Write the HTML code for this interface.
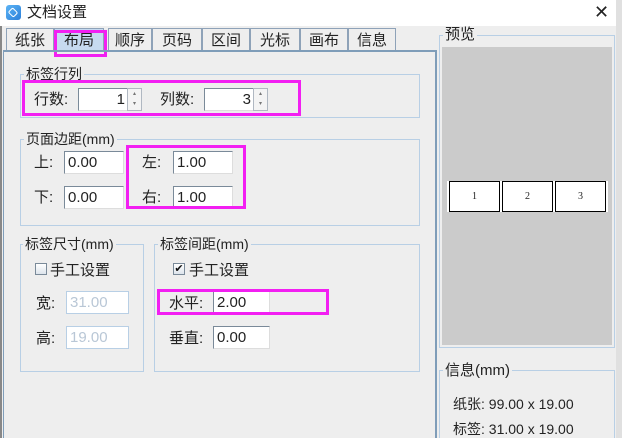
<!DOCTYPE html>
<html style="overflow:hidden;width:622px;height:438px"><head><meta charset="utf-8"><style>
*{margin:0;padding:0;box-sizing:border-box}
body{width:622px;height:438px;overflow:hidden;background:#eeeeee;font-family:"Liberation Sans","Noto Sans CJK SC",sans-serif;font-size:14px;color:#222;position:relative}
.a{position:absolute}
.t{position:absolute;line-height:16px;white-space:nowrap}
.tab{position:absolute;top:28px;height:23px;border:1px solid #8ea2b8;border-bottom:none;background:#eeeeee;font-size:15px;text-align:center;line-height:24px}
.grp{position:absolute;border:1px solid #b8cfe5}
.lg{position:absolute;background:#eeeeee;padding:0 2px;line-height:16px;font-size:14px;white-space:nowrap}
.in{position:absolute;background:#fff;border:1px solid #7a8a99;border-right-color:#ddd;border-bottom-color:#ddd;height:23px;line-height:21px;font-size:15px;padding-left:3px;color:#222}
.dis{border-color:#b8cfe5;color:#b9c7d6}
.mg{position:absolute;border:3px solid #f21ff2}
.cb{position:absolute;width:12px;height:12px;border:1px solid #7a8a99;background:linear-gradient(#fff,#dde4ec)}
.box{position:absolute;top:181px;height:31px;width:51px;border:1px solid #000;background:#fff;font-family:"Liberation Serif",serif;font-size:10px;text-align:center;line-height:29px}
</style></head><body>
<div class="a" style="left:0;top:0;width:616px;height:26px;background:#fff"></div>
<div class="a" style="left:616px;top:0;width:6px;height:438px;background:#e0e0e0"></div>
<div class="a" style="left:0;top:26px;width:2px;height:412px;background:#888"></div>
<div class="a" style="left:6px;top:5px;width:15px;height:15px;border-radius:3px;background:linear-gradient(135deg,#5cb4f5,#2c7fd9)"><div class="a" style="left:3px;top:4px;width:8px;height:7px;border:1px solid #fff;border-radius:2px;transform:rotate(45deg)"></div></div>
<div class="t" style="left:27px;top:5px;font-size:15px">文档设置</div>
<div class="t" style="left:594px;top:4px;font-size:18px;color:#222">✕</div>

<div class="tab" style="left:6px;width:48px">纸张</div>
<div class="tab" style="left:54px;width:50px;background:#c6daf0;height:24px">布局</div>
<div class="tab" style="left:108px;width:44px">顺序</div>
<div class="tab" style="left:152px;width:50px">页码</div>
<div class="tab" style="left:202px;width:48px">区间</div>
<div class="tab" style="left:250px;width:50px">光标</div>
<div class="tab" style="left:300px;width:48px">画布</div>
<div class="tab" style="left:348px;width:48px">信息</div>
<div class="mg" style="left:54px;top:30px;width:53px;height:27px"></div>

<div class="a" style="left:3px;top:50px;width:434px;height:388px;border:2px solid #7f9db9;border-bottom:none;border-left:1px solid #7f9db9"></div>

<div class="grp" style="left:20px;top:74px;width:400px;height:44px"></div>
<div class="lg" style="left:24px;top:66px">标签行列</div>
<div class="t" style="left:34px;top:92px;font-size:15px">行数:</div>
<div class="in" style="left:78px;top:88px;width:50px;text-align:right;padding-right:2px">1</div>
<div class="a" style="left:127px;top:88px;width:15px;height:23px;background:#f4f4f4;border:1px solid #b0b8c2;font-size:6px;text-align:center;line-height:10px;color:#777">▴<br>▾</div>
<div class="t" style="left:160px;top:92px;font-size:15px">列数:</div>
<div class="in" style="left:204px;top:88px;width:50px;text-align:right;padding-right:2px">3</div>
<div class="a" style="left:253px;top:88px;width:15px;height:23px;background:#f4f4f4;border:1px solid #b0b8c2;font-size:6px;text-align:center;line-height:10px;color:#777">▴<br>▾</div>
<div class="mg" style="left:22px;top:80px;width:279px;height:36px"></div>

<div class="grp" style="left:20px;top:139px;width:400px;height:87px"></div>
<div class="lg" style="left:24px;top:131px">页面边距(mm)</div>
<div class="t" style="left:34px;top:155px;font-size:15px">上:</div>
<div class="in" style="left:64px;top:151px;width:60px">0.00</div>
<div class="t" style="left:34px;top:190px;font-size:15px">下:</div>
<div class="in" style="left:64px;top:186px;width:60px">0.00</div>
<div class="t" style="left:142px;top:155px;font-size:15px">左:</div>
<div class="in" style="left:173px;top:151px;width:60px">1.00</div>
<div class="t" style="left:142px;top:190px;font-size:15px">右:</div>
<div class="in" style="left:173px;top:186px;width:60px">1.00</div>
<div class="mg" style="left:126px;top:145px;width:120px;height:64px"></div>

<div class="grp" style="left:20px;top:244px;width:124px;height:128px"></div>
<div class="lg" style="left:23px;top:236px">标签尺寸(mm)</div>
<div class="cb" style="left:35px;top:263px"></div>
<div class="t" style="left:50px;top:263px;font-size:15px">手工设置</div>
<div class="t" style="left:36px;top:296px;font-size:15px">宽:</div>
<div class="in dis" style="left:66px;top:291px;width:63px">31.00</div>
<div class="t" style="left:36px;top:331px;font-size:15px">高:</div>
<div class="in dis" style="left:66px;top:326px;width:63px">19.00</div>

<div class="grp" style="left:154px;top:244px;width:266px;height:128px"></div>
<div class="lg" style="left:158px;top:236px">标签间距(mm)</div>
<div class="cb" style="left:173px;top:263px;font-size:11px;line-height:10px;text-align:center;color:#111">✔</div>
<div class="t" style="left:189px;top:263px;font-size:15px">手工设置</div>
<div class="t" style="left:169px;top:296px;font-size:15px">水平:</div>
<div class="in" style="left:213px;top:291px;width:57px">2.00</div>
<div class="t" style="left:169px;top:331px;font-size:15px">垂直:</div>
<div class="in" style="left:213px;top:326px;width:57px">0.00</div>
<div class="mg" style="left:157px;top:289px;width:172px;height:26px"></div>

<div class="grp" style="left:439px;top:35px;width:176px;height:313px"></div>
<div class="lg" style="left:443px;top:27px;font-size:15px">预览</div>
<div class="a" style="left:442px;top:47px;width:170px;height:298px;background:#cbcbcb"></div>
<div class="a" style="left:447px;top:181px;width:161px;height:31px;background:#fff"></div>
<div class="box" style="left:449px">1</div>
<div class="box" style="left:502px">2</div>
<div class="box" style="left:555px">3</div>

<div class="grp" style="left:439px;top:370px;width:176px;height:70px;border-bottom:none"></div>
<div class="lg" style="left:443px;top:363px;font-size:15px">信息(mm)</div>
<div class="t" style="left:453px;top:396px;font-size:14px">纸张: 99.00 x 19.00</div>
<div class="t" style="left:453px;top:421px;font-size:14px">标签: 31.00 x 19.00</div>
</body></html>
